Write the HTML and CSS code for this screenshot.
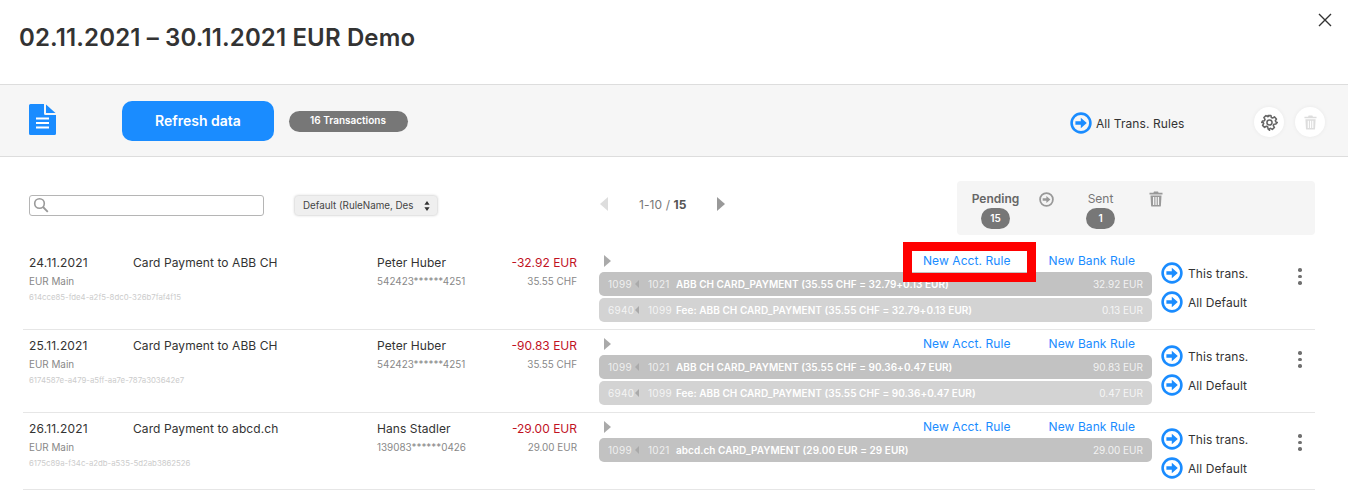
FILE: index.html
```html
<!DOCTYPE html>
<html lang="en">
<head>
<meta charset="utf-8">
<title>Demo</title>
<link rel="stylesheet" href="styles.css">
</head>
<body>
<svg class="defs" width="0" height="0" aria-hidden="true">
  <symbol id="go" viewBox="0 0 22 22">
    <circle cx="11" cy="11" r="9.4" fill="none" stroke="currentColor" stroke-width="2.600"/>
    <path d="M5.400 9.300h5.400V5.800L16.800 11l-6 5.200v-3.500H5.400z" fill="currentColor"/>
  </symbol>
  <symbol id="trash" viewBox="0 0 14 16">
    <path d="M5 0.500h4l.6 1.300H13.500v1.700H.5V1.800h3.900zM1.500 4.500h11l-.6 10.200a1 1 0 0 1-1 .9H3.100a1 1 0 0 1-1-.9zM4 6v8h1.300V6zM6.400 6v8h1.300V6zM8.800 6v8h1.300V6z" fill="currentColor" fill-rule="evenodd"/>
  </symbol>
</svg>

<header class="top">
  <h1 class="title">02.11.2021 – 30.11.2021 EUR Demo</h1>
  <button class="close" aria-label="Close">
    <svg width="14" height="14" viewBox="0 0 14 14"><path d="M1 1l12 12M13 1L1 13" stroke="#333" stroke-width="1.400" fill="none"/></svg>
  </button>
</header>

<section class="toolbar">
  <svg class="doc" width="27" height="31" viewBox="0 0 27 31">
    <path d="M1.500 0H15v9.500a1.500 1.500 0 0 0 1.500 1.500H27v18.500a1.500 1.500 0 0 1-1.500 1.500h-24A1.500 1.500 0 0 1 0 29.500v-28A1.500 1.500 0 0 1 1.500 0z" fill="#1a8cff"/>
    <path d="M17 0.500L26.500 9H17z" fill="#1a8cff"/>
    <path d="M7 14.500h13M7 19h13M7 23.500h13" stroke="#fff" stroke-width="2"/>
  </svg>
  <button class="refresh">Refresh data</button>
  <span class="pill pill-wide">16 Transactions</span>
  <a class="go-link all-rules"><svg class="go"><use href="#go"/></svg>All Trans. Rules</a>
  <span class="round-btn round-first">
    <svg width="17" height="17" viewBox="0 0 24 24"><path d="M10 2h4l.6 2.900 1.800.8 2.500-1.600 2.900 2.900-1.600 2.500.8 1.800L23 12l-2 2-2.900.6-.8 1.800 1.600 2.500-2.900 2.900-2.500-1.600-1.800.8L12 23l-2-2-.6-2.900-1.800-.8-2.500 1.600-2.900-2.900 1.600-2.500-.8-1.800L1 12l1-2 2.900-.6.800-1.800-1.600-2.500 2.900-2.900 2.500 1.600 1.800-.8z" fill="none" stroke="#666" stroke-width="2.200" stroke-linejoin="round"/><circle cx="12" cy="12" r="3.600" fill="none" stroke="#666" stroke-width="2.200"/></svg>
  </span>
  <span class="round-btn round-faded"><svg class="trash-ic"><use href="#trash"/></svg></span>
</section>

<section class="filters">
  <div class="search">
    <svg width="16" height="16" viewBox="0 0 16 16"><circle cx="6.500" cy="6.500" r="4.800" fill="none" stroke="#999" stroke-width="1.600"/><path d="M10 10l4.800 4.800" stroke="#999" stroke-width="1.800"/></svg>
  </div>
  <div class="select">
    <span class="select-text">Default (RuleName, Des</span>
    <svg width="6" height="10" viewBox="0 0 6 10"><path d="M3 0l2.600 3.800H.4zM3 10L.4 6.200h5.200z" fill="#333"/></svg>
  </div>
  <div class="pager">
    <span class="tri tri-left tri-faded"></span>
    <span class="pager-text">1-10 / <b>15</b></span>
    <span class="tri tri-right"></span>
  </div>
  <div class="status">
    <div class="status-col">
      <span class="status-name status-active">Pending</span>
      <span class="pill pill-count">15</span>
    </div>
    <svg class="status-go"><use href="#go"/></svg>
    <div class="status-col status-sent">
      <span class="status-name">Sent</span>
      <span class="pill pill-count">1</span>
    </div>
    <svg class="status-trash"><use href="#trash"/></svg>
  </div>
</section>

<main class="rows">
  <article class="row">
    <div class="c-date"><div class="main">24.11.2021</div><div class="sub">EUR Main</div><div class="uuid">614cce85-fde4-a2f5-8dc0-326b7faf4f15</div></div>
    <div class="main c-desc">Card Payment to ABB CH</div>
    <div class="c-name"><div class="main">Peter Huber</div><div class="sub">542423******4251</div></div>
    <div class="c-amt"><div class="main neg">-32.92 EUR</div><div class="sub">35.55 CHF</div></div>
    <div class="c-book">
      <div class="book-head"><span class="tri tri-small"></span><a class="rule rule-acct">New Acct. Rule</a><a class="rule">New Bank Rule</a></div>
      <div class="bar"><span class="acc">1099</span><span class="mini"></span><span class="acc acc2">1021</span><b>ABB CH CARD_PAYMENT (35.55 CHF = 32.79+0.13 EUR)</b><span class="val">32.92 EUR</span></div>
      <div class="bar bar-light"><span class="acc">6940</span><span class="mini"></span><span class="acc acc2">1099</span><b>Fee: ABB CH CARD_PAYMENT (35.55 CHF = 32.79+0.13 EUR)</b><span class="val">0.13 EUR</span></div>
    </div>
    <div class="c-act"><a class="go-link"><svg class="go"><use href="#go"/></svg>This trans.</a><a class="go-link"><svg class="go"><use href="#go"/></svg>All Default</a></div>
    <div class="dots"><i></i><i></i><i></i></div>
  </article>

  <article class="row">
    <div class="c-date"><div class="main">25.11.2021</div><div class="sub">EUR Main</div><div class="uuid">6174587e-a479-a5ff-aa7e-787a303642e7</div></div>
    <div class="main c-desc">Card Payment to ABB CH</div>
    <div class="c-name"><div class="main">Peter Huber</div><div class="sub">542423******4251</div></div>
    <div class="c-amt"><div class="main neg">-90.83 EUR</div><div class="sub">35.55 CHF</div></div>
    <div class="c-book">
      <div class="book-head"><span class="tri tri-small"></span><a class="rule rule-acct">New Acct. Rule</a><a class="rule">New Bank Rule</a></div>
      <div class="bar"><span class="acc">1099</span><span class="mini"></span><span class="acc acc2">1021</span><b>ABB CH CARD_PAYMENT (35.55 CHF = 90.36+0.47 EUR)</b><span class="val">90.83 EUR</span></div>
      <div class="bar bar-light"><span class="acc">6940</span><span class="mini"></span><span class="acc acc2">1099</span><b>Fee: ABB CH CARD_PAYMENT (35.55 CHF = 90.36+0.47 EUR)</b><span class="val">0.47 EUR</span></div>
    </div>
    <div class="c-act"><a class="go-link"><svg class="go"><use href="#go"/></svg>This trans.</a><a class="go-link"><svg class="go"><use href="#go"/></svg>All Default</a></div>
    <div class="dots"><i></i><i></i><i></i></div>
  </article>

  <article class="row row-short">
    <div class="c-date"><div class="main">26.11.2021</div><div class="sub">EUR Main</div><div class="uuid">6175c89a-f34c-a2db-a535-5d2ab3862526</div></div>
    <div class="main c-desc">Card Payment to abcd.ch</div>
    <div class="c-name"><div class="main">Hans Stadler</div><div class="sub">139083******0426</div></div>
    <div class="c-amt"><div class="main neg">-29.00 EUR</div><div class="sub">29.00 EUR</div></div>
    <div class="c-book">
      <div class="book-head"><span class="tri tri-small"></span><a class="rule rule-acct">New Acct. Rule</a><a class="rule">New Bank Rule</a></div>
      <div class="bar"><span class="acc">1099</span><span class="mini"></span><span class="acc acc2">1021</span><b>abcd.ch CARD_PAYMENT (29.00 EUR = 29 EUR)</b><span class="val">29.00 EUR</span></div>
    </div>
    <div class="c-act"><a class="go-link"><svg class="go"><use href="#go"/></svg>This trans.</a><a class="go-link"><svg class="go"><use href="#go"/></svg>All Default</a></div>
    <div class="dots"><i></i><i></i><i></i></div>
  </article>
</main>

<div class="highlight"></div>
</body>
</html>
```

FILE: styles.css
```css
* { box-sizing: border-box; }
html, body { margin: 0; padding: 0; }
body {
  position: relative;
  height: 494px;
  overflow: hidden;
  background: #fff;
  color: #333;
  font-family: Inter, "Liberation Sans", sans-serif;
}
.defs { position: absolute; }
button { font-family: inherit; border: 0; padding: 0; }

.top {
  height: 84px;
  display: flex;
  justify-content: space-between;
  padding: 23px 16px 0 19px;
}
.title { margin: 0; font-size: 24px; line-height: 29px; font-weight: 600; letter-spacing: .14px; color: #333; }
.close { width: 14px; height: 14px; margin-top: -10px; background: none; line-height: 0; }

.toolbar {
  height: 73px;
  display: flex;
  align-items: flex-start;
  background: #f6f6f6;
  border-top: 1px solid #ddd;
  border-bottom: 1px solid #ddd;
  padding-left: 29px;
}
.doc { margin-top: 19px; flex: none; }
.refresh {
  margin: 16px 0 0 66px;
  width: 152px;
  height: 40px;
  padding: 0 0 2px 0;
  border-radius: 10px;
  background: #1a8cff;
  color: #fff;
  font-size: 14px;
  font-weight: 600;
}
.pill {
  display: inline-block;
  background: #777;
  color: #fff;
  font-weight: 600;
  text-align: center;
  border-radius: 11px;
}
.pill-wide { margin: 26px 0 0 15px; width: 119px; height: 21px; padding-right: 1px; font-size: 10px; line-height: 19px; }
.go-link {
  display: flex;
  align-items: center;
  gap: 5px;
  font-size: 12px;
  letter-spacing: .08px;
  color: #333;
  height: 22px;
}
.go { width: 22px; height: 22px; color: #1a8cff; flex: none; }
.all-rules { margin: 27px 0 0 662px; gap: 4px; }
.round-btn {
  width: 30px;
  height: 30px;
  border-radius: 50%;
  background: #fff;
  display: flex;
  align-items: center;
  justify-content: center;
  box-shadow: 0 0 4px rgba(0, 0, 0, .06);
  margin-top: 22px;
}
.round-first { margin-left: 70px; }
.round-faded { margin-left: 11px; color: #ddd; }
.trash-ic { width: 13px; height: 15px; }

.filters {
  display: flex;
  align-items: flex-start;
  height: 90px;
  padding: 24px 33px 0 29px;
}
.search {
  width: 235px;
  height: 21px;
  margin-top: 14px;
  border: 1px solid #b5b5b5;
  border-radius: 3px;
  padding: 1px 3px;
  line-height: 0;
}
.select {
  width: 142px;
  height: 19px;
  margin: 15px 0 0 31px;
  display: flex;
  align-items: center;
  justify-content: space-between;
  padding: 0 7px 0 8px;
  background: #efefef;
  border-radius: 3px;
  box-shadow: 0 0 3px rgba(0, 0, 0, .3);
  font-size: 9.800px;
  color: #444;
}
.select-text { white-space: nowrap; }
.pager {
  display: flex;
  align-items: center;
  margin: 15px 0 0 163px;
  height: 16px;
}
.pager-text { margin: 0 30px 0 31px; font-size: 12px; letter-spacing: .08px; color: #777; }
.pager-text b { color: #555; font-weight: 700; }
.tri { width: 0; height: 0; display: block; border-style: solid; border-color: transparent; }
.tri-right { border-width: 7px 0 7px 8px; border-left-color: #999; }
.tri-left { border-width: 7px 8px 7px 0; border-right-color: #999; }
.tri-faded { border-right-color: #ddd; }
.status {
  width: 358px;
  height: 54px;
  margin-left: auto;
  background: #f5f5f5;
  border-radius: 4px;
  display: flex;
  align-items: flex-start;
  padding: 10px 0 0 13px;
}
.status-col { display: flex; flex-direction: column; align-items: center; width: 51px; }
.status-sent { margin-left: 32px; width: 29px; }
.status-name { font-size: 12px; line-height: 15px; color: #777; }
.status-active { font-weight: 600; color: #666; }
.pill-count { width: 29px; height: 21px; margin-top: 2px; font-size: 10px; line-height: 20px; }
.status-go { width: 15px; height: 15px; margin-left: 18px; margin-top: 1px; color: #999; }
.status-trash { width: 14px; height: 16px; margin-left: 34px; color: #999; }

.rows { margin: 0 33px 0 23px; }
.row {
  display: grid;
  grid-template-columns: 104px 244px 115px 85px 575px 146px 1fr;
  height: 83px;
  padding: 8px 0 0 6px;
  border-bottom: 1px solid #e6e6e6;
}
.row-short { height: 77px; }
.main { font-size: 12px; line-height: 15px; letter-spacing: .08px; color: #333; }
.c-date .main { letter-spacing: .16px; }
.sub { font-size: 9.900px; line-height: 13px; margin-top: 5px; color: #888; }
.uuid { font-size: 7.800px; line-height: 9px; margin-top: 5px; color: #ccc; white-space: nowrap; }
.neg { color: #c1121f; letter-spacing: 0; }
.c-amt { text-align: right; }
.c-book { margin: -3px 0 0 22px; }
.c-act { margin-left: 9px; display: flex; flex-direction: column; gap: 7px; padding-top: 7px; }
.book-head {
  display: flex;
  align-items: flex-start;
  height: 20px;
  padding-left: 5px;
}
.tri-small {
  margin-top: 3px;
  border-width: 6.500px 0 6.500px 7px;
  border-left-color: #aaa;
}
.rule { font-size: 12px; line-height: 15px; margin-top: 1px; letter-spacing: .08px; color: #1a8cff; margin-left: 38px; white-space: nowrap; }
.rule-acct { margin-left: auto; }
.book-head .rule:last-child { margin-right: 17px; }
.bar {
  display: flex;
  align-items: center;
  height: 24px;
  margin-bottom: 2px;
  padding: 0 9px;
  background: #c2c2c2;
  border-radius: 5px;
  color: #fff;
  font-size: 10px;
  white-space: nowrap;
}
.bar-light { background: #d3d3d3; }
.bar b { font-weight: 600; margin-left: 6px; letter-spacing: .04px; }
.acc { width: 24px; flex: none; opacity: .75; letter-spacing: .3px; }
.acc2 { width: 22px; margin-left: 9px; }
.mini {
  width: 0; height: 0; margin-left: 3px;
  border-style: solid;
  border-width: 4px 4px 4px 0;
  border-color: transparent #aaa transparent transparent;
}
.val { margin-left: auto; opacity: .8; }
.dots { display: flex; flex-direction: column; gap: 3px; padding-top: 13px; }
.dots i { width: 3.500px; height: 3.500px; border-radius: 50%; background: #707070; }

.highlight {
  position: absolute;
  left: 903px;
  top: 242px;
  width: 133px;
  height: 40px;
  border: 9px solid #f00;
}
```
